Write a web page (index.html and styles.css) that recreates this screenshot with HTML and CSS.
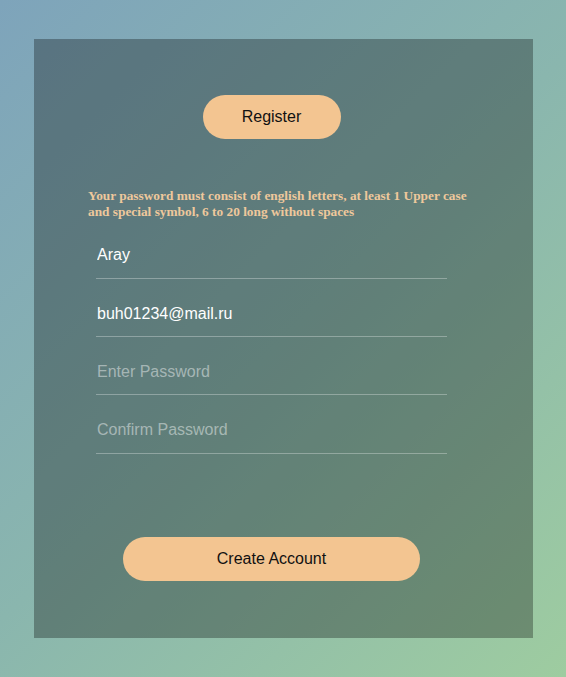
FILE: index.html
```html
<!DOCTYPE html>
<html lang="en">
<head>
<meta charset="utf-8">
<title>Register</title>
<link rel="stylesheet" href="styles.css">
</head>
<body>
<div class="page">
  <div class="card">
    <form class="form">
      <button type="button" class="btn btn-register">Register</button>
      <p class="hint">Your password must consist of english letters, at least 1 Upper case and special symbol, 6 to 20 long without spaces</p>
      <input class="field" type="text" value="Aray">
      <input class="field" type="email" value="buh01234@mail.ru">
      <input class="field" type="password" placeholder="Enter Password">
      <input class="field" type="password" placeholder="Confirm Password">
      <button type="button" class="btn btn-create">Create Account</button>
    </form>
  </div>
</div>
</body>
</html>
```

FILE: styles.css
```css
html, body {
  margin: 0;
  padding: 0;
  height: 100%;
}

body {
  background: linear-gradient(135deg, #7ea4bb 0%, #8ab6ae 50%, #9ecca0 100%);
  font-family: "Liberation Sans", Arial, sans-serif;
}

.page {
  padding: 39px 33px 0 34px;
}

.card {
  width: 499px;
  height: 599px;
  box-sizing: border-box;
  background: rgba(0, 0, 0, 0.3);
  padding: 56px 0 0 54px;
}

.form {
  width: 367px;
  display: flex;
  flex-direction: column;
  align-items: center;
}

.btn {
  background: #f3c591;
  border: none;
  border-radius: 22px;
  height: 44px;
  font-family: "Liberation Sans", Arial, sans-serif;
  font-size: 16px;
  color: #111;
  padding: 0;
  cursor: pointer;
}

.btn-register {
  width: 138px;
}

.hint {
  align-self: flex-start;
  width: 392px;
  margin: 49px 0 0 0;
  font-family: "Liberation Serif", "Times New Roman", serif;
  font-weight: bold;
  font-size: 13.33px;
  line-height: 16.3px;
  color: #eec89c;
}

.field {
  display: block;
  width: 351px;
  height: 45.3px;
  box-sizing: border-box;
  margin: 13px 0 0 0;
  padding: 0 0 1px 1px;
  background: transparent;
  border: none;
  border-bottom: 1px solid rgba(255, 255, 255, 0.3);
  outline: none;
  font-family: "Liberation Sans", Arial, sans-serif;
  font-size: 16px;
  color: #ffffff;
}

.field::placeholder {
  color: rgba(255, 255, 255, 0.45);
}

.btn-create {
  width: 297px;
  margin-top: 83px;
}
```
